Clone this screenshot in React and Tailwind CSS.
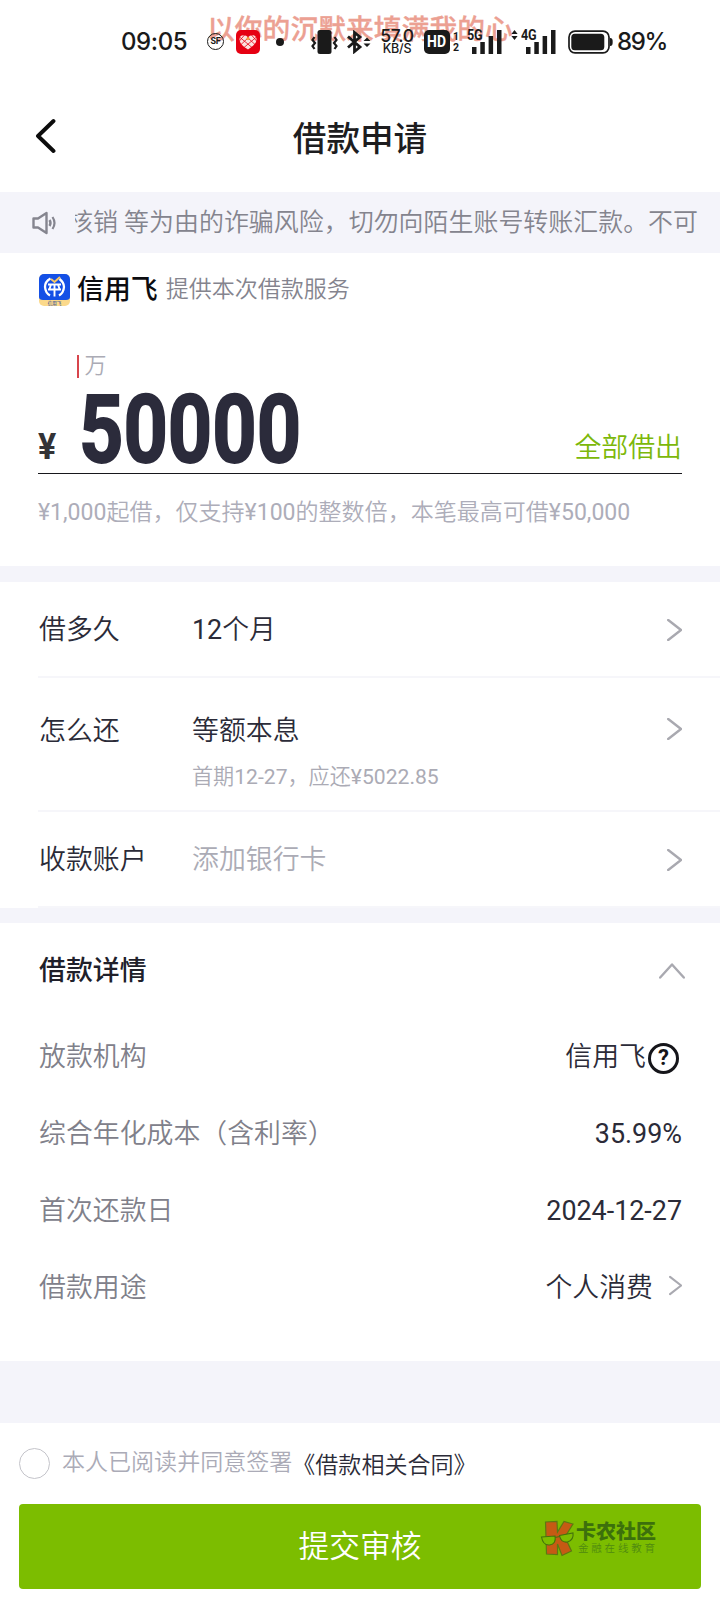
import { clsx } from "clsx";

const FONT = "font-['Roboto','Noto_Sans_CJK_SC_DemiLight','Noto_Sans_CJK_SC',sans-serif]";
const FONT_MEDIUM = "font-['Noto_Sans_CJK_SC',sans-serif] font-medium";

function Chevron({ className = "w-[15px] h-[22px]" }) {
  return (
    <svg className={className} viewBox="0 0 15 22" fill="none">
      <path
        d="M1.2 1 L14 11 L1.2 21"
        stroke="#a9a9b0"
        strokeWidth="2.4"
        strokeLinecap="round"
        strokeLinejoin="round"
      />
    </svg>
  );
}

function Signal({ label, arrows }) {
  return (
    <div className="relative w-[35px] h-6">
      <span className="absolute -left-[5px] -top-[2px] font-['Roboto'] text-[14px] leading-[14px] font-bold tracking-tight scale-x-90 origin-left">
        {label}
      </span>
      {arrows && (
        <svg className="absolute -left-[15px] top-0 w-[7px] h-[10px]" viewBox="0 0 7 10">
          <path d="M3.5 0 L6.6 4 H.4 Z M3.5 10 L.4 6 H6.6 Z" fill="#1a1a1a" />
        </svg>
      )}
      <svg className="w-[30px] h-6" viewBox="0 0 30 24" fill="#1a1a1a">
        <rect x="0" y="17" width="4.5" height="7" />
        <rect x="8.3" y="12" width="4.5" height="12" />
        <rect x="16.6" y="6" width="4.5" height="18" />
        <rect x="25" y="0" width="4.5" height="24" />
      </svg>
    </div>
  );
}

function StatusBar() {
  return (
    <div className="relative shrink-0 h-[84px] text-[#1a1a1a]">
      {/* Floating lyric */}
      <p className={clsx(FONT_MEDIUM, "absolute left-[207px] top-[7px] text-[27.8px] leading-10 text-[#eca092] [-webkit-text-stroke:0.3px] whitespace-nowrap")}>
        以你的沉默来填满我的心
      </p>

      <div className="relative flex items-center h-[83px] pl-[121px]">
        <span className="w-[86px] font-['Inter'] text-[24px] font-[550] tracking-[-0.4px]">
          09:05
        </span>
        <span className="w-[17px] h-[17px] rounded-full border-[1.5px] border-[#1a1a1a] flex items-center justify-center font-['Roboto'] text-[9px] font-bold tracking-[-0.3px]">
          SF
        </span>
        <svg className="ml-3 w-6 h-6" viewBox="0 0 24 24">
          <rect width="24" height="24" rx="5" fill="#e60012" />
          <path
            d="M12 19.5 C7 16.5 3.5 13 3.5 9.5 C3.5 6.8 5 5.3 7.5 5.3 C9.5 5.3 11 6 12 7.5 C13 6 14.5 5.3 16.5 5.3 C19 5.3 20.5 6.8 20.5 9.5 C20.5 13 17 16.5 12 19.5 Z"
            fill="#fbe3df"
          />
          <path
            d="M3 11.5 L8.5 5 M4.5 15 L13 7 M8 17.5 L20.5 7 M21 11.5 L15.5 5 M19.5 15 L11 7 M16 17.5 L3.5 7"
            stroke="#e60012"
            strokeWidth="0.8"
          />
          <circle cx="12" cy="8.5" r="1.5" fill="#f2a33a" />
        </svg>
        <span className="ml-4 w-2 h-2 rounded-full bg-[#1a1a1a]" />
        <svg className="ml-[27px] w-[27px] h-6" viewBox="0 0 27 24" fill="none">
          <rect x="6.5" y="0" width="14" height="24" rx="2.5" fill="#1a1a1a" />
          <path
            d="M3.5 7 L1.5 10 L4 13 L1.5 16 L3.5 19 M23.5 7 L25.5 10 L23 13 L25.5 16 L23.5 19"
            stroke="#1a1a1a"
            strokeWidth="2.2"
          />
        </svg>
        <svg className="ml-[9px] w-6 h-6" viewBox="0 0 24 24" fill="none">
          <path
            d="M1 6.5 L13 17 L7.5 21.5 V2.5 L13 7 L1 17.5"
            stroke="#1a1a1a"
            strokeWidth="2.8"
          />
          <path d="M20 7.5 L23.5 11 H16.5 Z M20 17 L16.5 13.5 H23.5 Z" fill="#1a1a1a" />
        </svg>
        <div className="ml-[8px] w-[36px] flex flex-col items-center font-['Inter'] font-medium">
          <span className="text-[17.5px] leading-[14px] tracking-[-0.3px]">57.0</span>
          <span className="text-[12.5px] leading-[11px] tracking-[-0.2px] whitespace-nowrap">KB/S</span>
        </div>
        <span className="ml-[9px] w-[26px] h-6 rounded-[5px] bg-[#1a1a1a] text-white font-['Roboto'] text-[17px] font-bold flex items-center justify-center">
          <span className="inline-block scale-x-[0.82]">HD</span>
        </span>
        <span className="ml-[3px] w-[7px] flex flex-col font-['Roboto'] text-[10.5px] leading-[11px] font-bold">
          <span>1</span>
          <span>2</span>
        </span>
        <div className="ml-[12px] flex gap-[19px]">
          <Signal label="5G" />
          <Signal label="4G" arrows />
        </div>
        <svg className="ml-[7px] w-[45px] h-6" viewBox="0 0 45 24">
          <rect x="1" y="1.2" width="40" height="21.6" rx="6" fill="none" stroke="#1a1a1a" strokeWidth="1.7" />
          <rect x="3.3" y="3.8" width="33" height="16.5" rx="3.5" fill="#1a1a1a" />
          <path d="M42 8 C44.3 8 44.7 9.5 44.7 12 C44.7 14.5 44.3 16 42 16 Z" fill="#1a1a1a" />
        </svg>
        <span className="ml-[4px] font-['Inter'] text-[24px] font-[550] tracking-[-1.4px]">
          89%
        </span>
      </div>
    </div>
  );
}

function BrandLogo() {
  return (
    <div className="relative w-[31px] h-8 rounded-[5px] overflow-hidden">
      <svg className="w-full h-full" viewBox="0 0 31 32" fill="none">
        <rect width="31" height="32" fill="#fbd98b" />
        <path d="M0 0 H31 V23 Q31 26 27 26 H4 Q0 26 0 23 Z" fill="#1450e6" />
        <path
          d="M11.5 4.5 Q6 7.5 6 13 Q6.5 19 11 21.5 M20.5 5 Q25 8.5 25 13 Q24.5 19 20 21.5"
          stroke="#fff"
          strokeWidth="2.3"
        />
        <path d="M9 10.5 H22 M9 15.5 H22 M15.5 11 V22.5 M12 10.5 L10.5 15 M19 10.5 L20.5 15" stroke="#fff" strokeWidth="1.9" />
        <path d="M12 5 L15.5 8 L21 3" stroke="#f7c766" strokeWidth="2" />
      </svg>
      <span className="absolute inset-x-0 bottom-0 text-center text-[4.5px] leading-[5px] font-bold text-[#5b6c96]">
        信用飞
      </span>
    </div>
  );
}

const terms = [
  { label: "借多久", value: "12个月", row: "h-[96px] pt-[28px]" },
  { label: "怎么还", value: "等额本息", note: "首期12-27，应还¥5022.85", row: "h-[134px] pt-[33px]" },
  { label: "收款账户", value: "添加银行卡", muted: true, row: "h-[96px] pt-[28px]" },
];

const details = [
  { label: "放款机构", value: "信用飞", help: true },
  { label: "综合年化成本（含利率）", value: "35.99%" },
  { label: "首次还款日", value: "2024-12-27" },
  { label: "借款用途", value: "个人消费", link: true },
];

function HelpIcon() {
  return (
    <span className="ml-[2px] mr-[3px] mt-[2px] w-[31px] h-[31px] rounded-full border-[3px] border-[#15151a] flex items-center justify-center text-[22px] leading-none font-bold text-[#15151a]">
      ?
    </span>
  );
}

export default function App() {
  return (
    <div className={clsx(FONT, "w-[720px] h-[1608px] bg-white text-[#2b2b38] overflow-hidden flex flex-col")}>
      <StatusBar />

      {/* Nav */}
      <header className="relative shrink-0 h-[108px] flex items-center justify-center">
        <svg className="absolute left-[35px] top-[34px] w-[21px] h-[36px]" viewBox="0 0 21 36" fill="none">
          <path d="M18.5 3 L3 18 L18.5 33" stroke="#0c0c0c" strokeWidth="3.9" strokeLinecap="round" strokeLinejoin="round" />
        </svg>
        <h1 className={clsx(FONT_MEDIUM, "text-[33.6px] leading-[104px] text-[#1d1d1f] pb-[3px]")}>借款申请</h1>
      </header>

      {/* Notice */}
      <div className="shrink-0 h-[61px] bg-[#f4f4fa] flex items-center pl-8 text-[#84848e]">
        <svg className="mt-px w-[25px] h-[24px]" viewBox="0 0 25 24" fill="none" stroke="#85858f">
          <path d="M1.5 7.5 H6 L14.5 2 V22 L6 16.5 H1.5 Z" strokeWidth="2.4" strokeLinejoin="round" />
          <path d="M17.5 9 Q19.5 12 17.5 15" strokeWidth="2.4" />
          <path d="M20.5 6 Q24.5 12 20.5 18" strokeWidth="2.2" />
        </svg>
        <div className="ml-[18px] mt-px w-[623px] overflow-hidden">
          <p className="-ml-[7px] text-[24.96px] leading-[40px] whitespace-nowrap">
            核销 等为由的诈骗风险，切勿向陌生账号转账汇款。不可
          </p>
        </div>
      </div>

      {/* Amount */}
      <section className="shrink-0 h-[313px] px-[38px]">
        <div className="flex items-center h-[73px] pl-px">
          <BrandLogo />
          <span className={clsx(FONT_MEDIUM, "-mt-[3px] ml-[7px] text-[26.88px] text-[#0c0c10]")}>信用飞</span>
          <span className="mt-px ml-[8px] text-[23.04px] text-[#84848e]">提供本次借款服务</span>
        </div>
        <div className="mt-[28px] ml-[39px] h-[24px] flex items-center">
          <span className="w-[1.5px] h-[23px] bg-[#d8454c]" />
          <span className="ml-[6px] text-[22px] leading-[24px] text-[#ababb5]">万</span>
        </div>
        <div className="h-[96px] flex items-end border-b border-[#17171c]">
          <span className="w-[41px] text-[37px] leading-[37px] pb-[8px] font-bold text-[#333336]">
            <span className="inline-block scale-x-[0.92] origin-left">¥</span>
          </span>
          <span className="h-[96px] w-[300px] text-[95px] leading-[105px] font-bold text-[#2b2b3b] [-webkit-text-stroke:1.8px]">
            <span className="inline-block scale-x-[0.815] origin-left">50000</span>
          </span>
          <span className="ml-auto pb-[5px] text-[26.88px] leading-[40px] text-[#7cb80a]">全部借出</span>
        </div>
        <p className="mt-[19px] text-[23.04px] leading-[40px] text-[#adadb9] whitespace-nowrap">
          ¥1,000起借，仅支持¥100的整数倍，本笔最高可借¥50,000
        </p>
      </section>

      <div className="shrink-0 h-4 bg-[#f4f4fa]" />

      {/* Terms */}
      <section className="shrink-0 pl-[38px] text-[26.88px] leading-[40px]">
        {terms.map(({ label, value, note, muted, row }) => (
          <div key={label} className={clsx("border-b-2 border-[#f6f6fa] pr-[38px] flex items-start", row)}>
            <span className="w-[154px] pl-px">{label}</span>
            <div>
              <p className={clsx(muted && "text-[#ababb5]")}>{value}</p>
              {note && <p className="mt-[6px] text-[21.12px] text-[#ababb5]">{note}</p>}
            </div>
            <Chevron className={clsx("ml-auto w-[15px] h-[22px]", note ? "mt-[7px]" : "mt-[9px]")} />
          </div>
        ))}
      </section>

      <div className="shrink-0 h-[15px] bg-[#f4f4fa]" />

      {/* Details */}
      <section className="shrink-0 h-[438px] pl-[39px] pr-[38px] text-[26.88px]">
        <div className="h-[95px] flex items-center justify-between">
          <h2 className={clsx(FONT_MEDIUM, "-mt-[2px] text-[#20202a]")}>借款详情</h2>
          <svg className="-mr-[3px] w-[26px] h-4" viewBox="0 0 26 16" fill="none">
            <path d="M1.2 14.5 L13 1.5 L24.8 14.5" stroke="#a9a9b0" strokeWidth="2.4" strokeLinecap="round" strokeLinejoin="round" />
          </svg>
        </div>
        {details.map(({ label, value, help, link }) => (
          <div key={label} className="h-[76.8px] pt-[2px] flex items-center justify-between">
            <span className="text-[#80808a]">{label}</span>
            <span className="flex items-center">
              {value}
              {help && <HelpIcon />}
              {link && <Chevron className="ml-[16px] -mt-[4px] w-[13px] h-[21px]" />}
            </span>
          </div>
        ))}
      </section>

      <div className="shrink-0 h-[62px] bg-[#f4f4fa]" />

      {/* Submit */}
      <footer className="shrink-0 h-[185px] px-[19px]">
        <div className="h-[81px] flex items-center text-[23.04px]">
          <span className="w-[31px] h-[31px] rounded-full border-[1.5px] border-[#c4c4ca]" />
          <span className="ml-[12px] text-[#ababb7]">本人已阅读并同意签署</span>
          <span className="mt-[6px]">《借款相关合同》</span>
        </div>
        <button className="relative w-full h-[85px] rounded-[4px] bg-[#7cbd00] text-white text-[30.72px] pt-[2px]">
          提交审核
          <span className="absolute left-[521px] top-[16px] flex text-left">
            <svg className="w-[35px] h-[37px]" viewBox="0 0 35 37">
              <path
                d="M5.5 2 L17 1.5 L17.5 12 L24 1.5 L33 4 L25 17 L31.5 31 L22 35.5 L17.5 24 L17.5 34.5 L6.5 34 Z"
                fill="#c65a14"
                stroke="#5c7a12"
                strokeWidth="1.2"
              />
              <path
                d="M1.5 17 L15 16 Q16.5 24 9.5 25 Q3 25.5 1.5 17 Z M19.5 15.5 L33 13 Q34 20 27.5 22 Q21 23 19.5 15.5 Z M15 17.5 L19.5 16.5"
                fill="#7cbd00"
                stroke="#44720c"
                strokeWidth="1.1"
              />
            </svg>
            <span className="ml-px flex flex-col">
              <span className="font-['Noto_Sans_CJK_SC'] text-[20px] leading-[22px] font-black text-[#3c700c]">卡农社区</span>
              <span className="pl-[2px] text-[10.5px] leading-[14px] tracking-[2.8px] text-[#4f8a10] whitespace-nowrap">金融在线教育</span>
            </span>
          </span>
        </button>
      </footer>
    </div>
  );
}
